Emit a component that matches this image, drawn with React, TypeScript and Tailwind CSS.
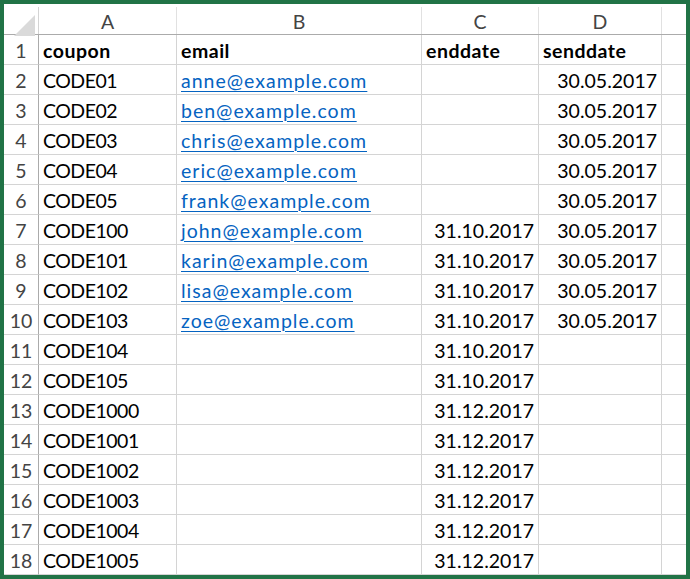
import React from "react";

type Row = {
  coupon: string;
  email?: string;
  enddate?: string;
  senddate?: string;
};

const rows: Row[] = [
  { coupon: "CODE01", email: "anne@example.com", senddate: "30.05.2017" },
  { coupon: "CODE02", email: "ben@example.com", senddate: "30.05.2017" },
  { coupon: "CODE03", email: "chris@example.com", senddate: "30.05.2017" },
  { coupon: "CODE04", email: "eric@example.com", senddate: "30.05.2017" },
  { coupon: "CODE05", email: "frank@example.com", senddate: "30.05.2017" },
  { coupon: "CODE100", email: "john@example.com", enddate: "31.10.2017", senddate: "30.05.2017" },
  { coupon: "CODE101", email: "karin@example.com", enddate: "31.10.2017", senddate: "30.05.2017" },
  { coupon: "CODE102", email: "lisa@example.com", enddate: "31.10.2017", senddate: "30.05.2017" },
  { coupon: "CODE103", email: "zoe@example.com", enddate: "31.10.2017", senddate: "30.05.2017" },
  { coupon: "CODE104", enddate: "31.10.2017" },
  { coupon: "CODE105", enddate: "31.10.2017" },
  { coupon: "CODE1000", enddate: "31.12.2017" },
  { coupon: "CODE1001", enddate: "31.12.2017" },
  { coupon: "CODE1002", enddate: "31.12.2017" },
  { coupon: "CODE1003", enddate: "31.12.2017" },
  { coupon: "CODE1004", enddate: "31.12.2017" },
  { coupon: "CODE1005", enddate: "31.12.2017" },
];

// column widths incl. their 1px right line
const cols = "grid grid-cols-[35px_138px_245px_117px_123px_24px]";

const Cell: React.FC<{ children?: React.ReactNode; right?: boolean; last?: boolean; bold?: boolean; tight?: boolean }> = ({
  children,
  right,
  last,
  bold,
  tight,
}) => (
  <div
    className={`h-[30px] flex items-center pt-[2px] border-b border-[#d4d4d4] ${last ? "" : "border-r"} ${
      right ? "justify-end pr-[4px]" : "pl-[4px]"
    } ${bold ? "font-bold tracking-[0.5px]" : ""} ${tight ? "tracking-[-0.5px]" : ""} whitespace-nowrap overflow-hidden`}
  >
    {children}
  </div>
);

const App: React.FC = () => {
  return (
    <div className="w-[690px] h-[579px] bg-[#217346] p-[4px] overflow-hidden">
      <div
        className="w-[682px] h-[571px] bg-white overflow-hidden text-black text-[19.5px] leading-none"
        style={{ fontFamily: "Lato, 'Liberation Sans', sans-serif" }}
      >
        {/* column header band */}
        <div className={`${cols} h-[31px] border-b border-[#ababab]`}>
          <div className="relative border-r border-[#d4d4d4] mt-[3px]">
            <svg className="absolute left-[10px] top-[8px]" width="21" height="21" viewBox="0 0 21 21">
              <polygon points="21,0 21,21 0,21" fill="#dadada" />
            </svg>
          </div>
          {["A", "B", "C", "D", ""].map((l, i) => (
            <div
              key={i}
              className={`flex items-center justify-center pt-[3px] text-[#444] mt-[3px] ${
                i < 4 ? "border-r border-[#e1e1e1]" : ""
              }`}
            >
              {l}
            </div>
          ))}
        </div>

        {/* row 1: headings */}
        <div className={cols}>
          <div className="h-[30px] flex items-center justify-center pt-[2px] text-[#444] border-b border-r border-b-[#d4d4d4] border-r-[#ababab]">
            1
          </div>
          <Cell bold>coupon</Cell>
          <Cell bold>email</Cell>
          <Cell bold>enddate</Cell>
          <Cell bold>senddate</Cell>
          <Cell last />
        </div>

        {rows.map((r, i) => (
          <div key={r.coupon} className={cols}>
            <div className="h-[30px] flex items-center justify-center pt-[2px] text-[#444] border-b border-r border-b-[#d4d4d4] border-r-[#ababab]">
              {i + 2}
            </div>
            <Cell tight>{r.coupon}</Cell>
            <Cell>
              {r.email && (
                <a href="#" className="text-[#0563c1] underline underline-offset-[3px] decoration-[1px] tracking-[1px]">
                  {r.email}
                </a>
              )}
            </Cell>
            <Cell right>{r.enddate}</Cell>
            <Cell right>{r.senddate}</Cell>
            <Cell last />
          </div>
        ))}
      </div>
    </div>
  );
};

export default App;
